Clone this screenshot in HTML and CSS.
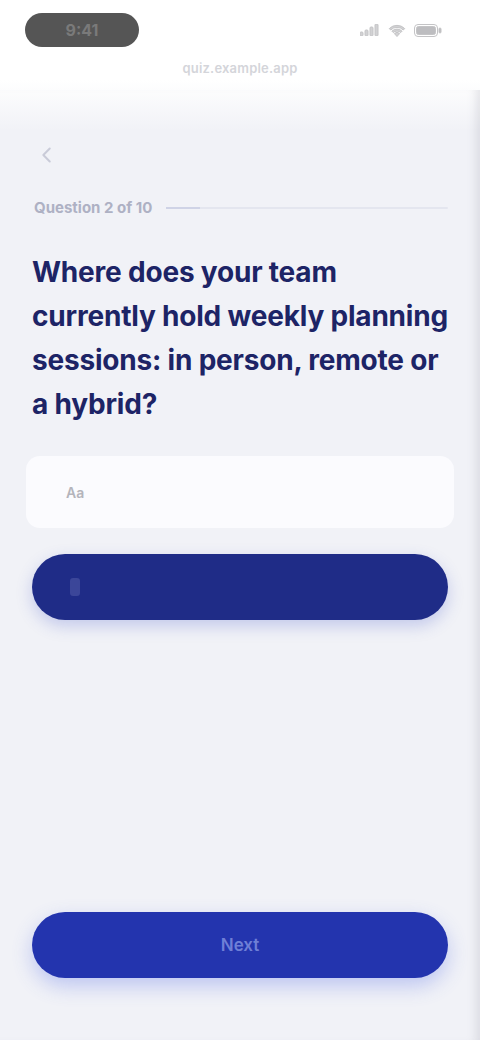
FILE: index.html
```html
<!DOCTYPE html>
<html lang="en">
<head>
<meta charset="utf-8">
<title>Question</title>
<link rel="stylesheet" href="styles.css">
</head>
<body>
<div class="phone">
  <div class="status">
    <div class="time-pill">9:41</div>
    <div class="status-icons">
      <svg width="20" height="12" viewBox="0 0 20 12"><rect x="0" y="8" width="3" height="4" rx="1"/><rect x="5" y="6" width="3" height="6" rx="1"/><rect x="10" y="3" width="3" height="9" rx="1"/><rect x="15" y="0" width="3" height="12" rx="1"/></svg>
      <svg width="18" height="13" viewBox="0 0 18 13"><path d="M9 12.5 6.4 9.6a3.6 3.6 0 0 1 5.2 0z"/><path d="M3.9 7.2a7.2 7.2 0 0 1 10.2 0l-1.4 1.4a5.2 5.2 0 0 0-7.4 0z"/><path d="M1.3 4.6a10.8 10.8 0 0 1 15.4 0l-1.4 1.4a8.8 8.8 0 0 0-12.6 0z"/></svg>
      <svg class="battery" width="28" height="13" viewBox="0 0 28 13"><rect x="0.5" y="0.5" width="23" height="12" rx="3.5" fill="none" stroke-width="1"/><rect x="2.5" y="2.5" width="19" height="8" rx="2"/><rect x="25" y="4" width="2" height="5" rx="1"/></svg>
    </div>
  </div>
  <div class="urlbar">quiz.example.app</div>

  <main class="main">
    <div class="back">
      <svg width="22" height="22" viewBox="0 0 24 24" fill="none" stroke="currentColor" stroke-width="2.2" stroke-linecap="round" stroke-linejoin="round"><path d="M15 5l-7 7 7 7"/></svg>
    </div>

    <div class="meta">
      <span class="meta-label">Question 2 of 10</span>
      <div class="track"><div class="track-fill" style="width: 12%"></div></div>
    </div>

    <h1 class="question">Where does your team currently hold weekly planning sessions: in person, remote or a hybrid?</h1>

    <div class="answer">
      <span class="placeholder">Aa</span>
    </div>

    <button class="btn btn-dark" type="button"><span class="btn-icon"></span></button>

    <div class="spacer"></div>

    <button class="btn btn-primary" type="button">Next</button>
  </main>
</div>
</body>
</html>
```

FILE: styles.css
```css
* {
  box-sizing: border-box;
}

html, body {
  margin: 0;
  padding: 0;
}

body {
  font-family: Inter, "Noto Sans", "Liberation Sans", sans-serif;
  background: #f1f2f7;
}

.phone {
  width: 480px;
  height: 1040px;
  display: flex;
  flex-direction: column;
  background: linear-gradient(#ffffff 0, #ffffff 80px, #f1f2f7 130px, #f1f2f7 100%);
}

.status {
  height: 60px;
  display: flex;
  align-items: center;
  justify-content: space-between;
  padding: 0 38px 0 25px;
}

.time-pill {
  width: 114px;
  height: 34px;
  border-radius: 17px;
  background: #555555;
  color: #7a7a7a;
  font-weight: 700;
  font-size: 16px;
  display: flex;
  align-items: center;
  justify-content: center;
}

.status-icons {
  display: flex;
  align-items: center;
  gap: 8px;
  fill: #d2d2d4;
  stroke: #c4c4c6;
}

.status-icons .battery {
  fill: #bdbdc0;
}

.urlbar {
  height: 30px;
  text-align: center;
  font-size: 13px;
  color: #d4d5da;
  font-weight: 600;
  letter-spacing: 0.2px;
}

.main {
  flex: 1;
  display: flex;
  flex-direction: column;
  padding: 54px 32px 62px;
  box-shadow: inset -10px 0 10px -6px rgba(120, 122, 140, 0.18);
}

.back {
  color: #c9cbd8;
  height: 24px;
  margin-left: 4px;
}

.meta {
  margin-top: 30px;
  display: flex;
  align-items: center;
  gap: 14px;
}

.meta-label {
  font-size: 15px;
  font-weight: 700;
  color: #aeb1c4;
  white-space: nowrap;
  margin-left: 2px;
}

.track {
  flex: 1;
  height: 2px;
  background: #e4e6ef;
  border-radius: 1px;
}

.track-fill {
  height: 100%;
  background: #cfd3e6;
}

.question {
  margin: 33px 0 0;
  font-size: 28px;
  line-height: 44px;
  font-weight: 700;
  color: #1d2466;
  letter-spacing: -0.2px;
}

.answer {
  margin: 30px -6px 0;
  height: 72px;
  background: #fbfbfe;
  border-radius: 14px;
  display: flex;
  align-items: center;
  padding: 0 40px;
}

.placeholder {
  font-size: 14px;
  color: #b4b4bb;
  font-weight: 600;
}

.btn {
  display: flex;
  align-items: center;
  justify-content: center;
  width: 100%;
  height: 66px;
  border: none;
  border-radius: 33px;
  font-family: inherit;
  font-size: 17px;
  font-weight: 600;
  color: #ffffff;
}

.btn-dark {
  margin-top: 26px;
  background: #1f2c87;
  justify-content: flex-start;
  padding: 0 38px;
  box-shadow: 0 6px 16px rgba(60, 80, 200, 0.25);
}

.btn-icon {
  width: 10px;
  height: 18px;
  border-radius: 3px;
  background: #3b4699;
}

.spacer {
  flex: 1;
}

.btn-primary {
  background: #2334ae;
  color: #6f7fd6;
  box-shadow: 0 8px 20px rgba(70, 95, 230, 0.3);
}
```
